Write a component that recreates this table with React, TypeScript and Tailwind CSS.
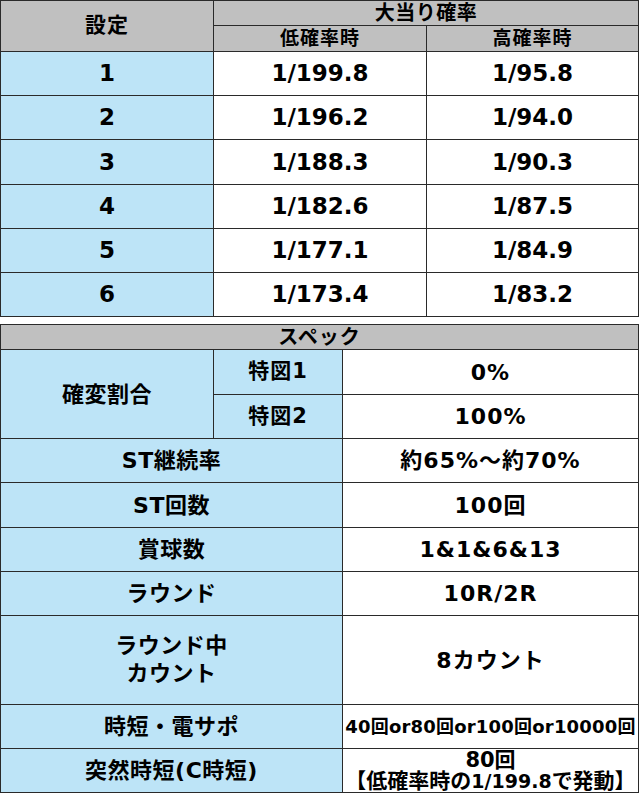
import React from 'react';

const font = "font-['DejaVu_Sans','Noto_Sans_CJK_JP',sans-serif] font-bold text-black";

const Cell: React.FC<{ className?: string; children?: React.ReactNode }> = ({ className = '', children }) => (
  <div className={`flex items-center justify-center text-center ${className}`}>{children}</div>
);

const gray = 'bg-[#c0c0c0]';
const blue = 'bg-[#bde4f7]';
const white = 'bg-white';

const odds = [
  ['1', '1/199.8', '1/95.8'],
  ['2', '1/196.2', '1/94.0'],
  ['3', '1/188.3', '1/90.3'],
  ['4', '1/182.6', '1/87.5'],
  ['5', '1/177.1', '1/84.9'],
  ['6', '1/173.4', '1/83.2'],
];

const specRows: [string, string][] = [
  ['ST継続率', '約65%～約70%'],
  ['ST回数', '100回'],
  ['賞球数', '1&1&6&13'],
  ['ラウンド', '10R/2R'],
];

export default function App() {
  return (
    <div className={`w-[640px] bg-white ${font}`}>
      {/* 大当り確率 */}
      <div className="grid w-[639px] h-[317px] grid-cols-[212px_212px_211px] grid-rows-[24px_25px_repeat(6,minmax(0,1fr))] gap-px p-px bg-[#2a2a2a]">
        <Cell className={`${gray} row-span-2 text-[21px] tracking-[1px]`}>設定</Cell>
        <Cell className={`${gray} col-span-2 text-[20px] tracking-[0.5px]`}>大当り確率</Cell>
        <Cell className={`${gray} text-[19px] tracking-[1px]`}>低確率時</Cell>
        <Cell className={`${gray} text-[19px] tracking-[1px]`}>高確率時</Cell>
        {odds.map(([s, low, high]) => (
          <React.Fragment key={s}>
            <Cell className={`${blue} text-[23px]`}>{s}</Cell>
            <Cell className={`${white} text-[23px]`}>{low}</Cell>
            <Cell className={`${white} text-[23px]`}>{high}</Cell>
          </React.Fragment>
        ))}
      </div>

      {/* スペック */}
      <div className="mt-[7px] grid w-[639px] grid-cols-[212px_128px_295px] grid-rows-[24px_44px_43px_43px_44px_43px_43px_88px_43px_43px] gap-px p-px bg-[#2a2a2a]">
        <Cell className={`${gray} col-span-3 text-[20px] tracking-[1px]`}>スペック</Cell>

        <Cell className={`${blue} row-span-2 text-[22px] tracking-[0.5px]`}>確変割合</Cell>
        <Cell className={`${blue} text-[21px] tracking-[1px]`}>特図1</Cell>
        <Cell className={`${white} text-[22px] tracking-[1px]`}>0%</Cell>
        <Cell className={`${blue} text-[21px] tracking-[1px]`}>特図2</Cell>
        <Cell className={`${white} text-[22px] tracking-[1px]`}>100%</Cell>

        {specRows.map(([label, value]) => (
          <React.Fragment key={label}>
            <Cell className={`${blue} col-span-2 text-[22px] tracking-[0.5px]`}>{label}</Cell>
            <Cell className={`${white} text-[22px] tracking-[1px]`}>{value}</Cell>
          </React.Fragment>
        ))}

        <Cell className={`${blue} col-span-2 flex-col text-[22px] leading-[28px] tracking-[0.5px]`}>
          <span>ラウンド中</span>
          <span>カウント</span>
        </Cell>
        <Cell className={`${white} text-[22px] tracking-[1px]`}>8カウント</Cell>

        <Cell className={`${blue} col-span-2 text-[22px] tracking-[0.5px]`}>時短・電サポ</Cell>
        <Cell className={`${white} text-[18px] tracking-[0.2px] whitespace-nowrap`}>40回or80回or100回or10000回</Cell>

        <Cell className={`${blue} col-span-2 text-[22px] tracking-[0.5px]`}>突然時短(C時短)</Cell>
        <Cell className={`${white} flex-col text-[21px] leading-[21px] whitespace-nowrap`}>
          <span>80回</span>
          <span>
            【低確率時の<span className="text-[19px]">1/199.8</span>で発動】
          </span>
        </Cell>
      </div>
    </div>
  );
}
